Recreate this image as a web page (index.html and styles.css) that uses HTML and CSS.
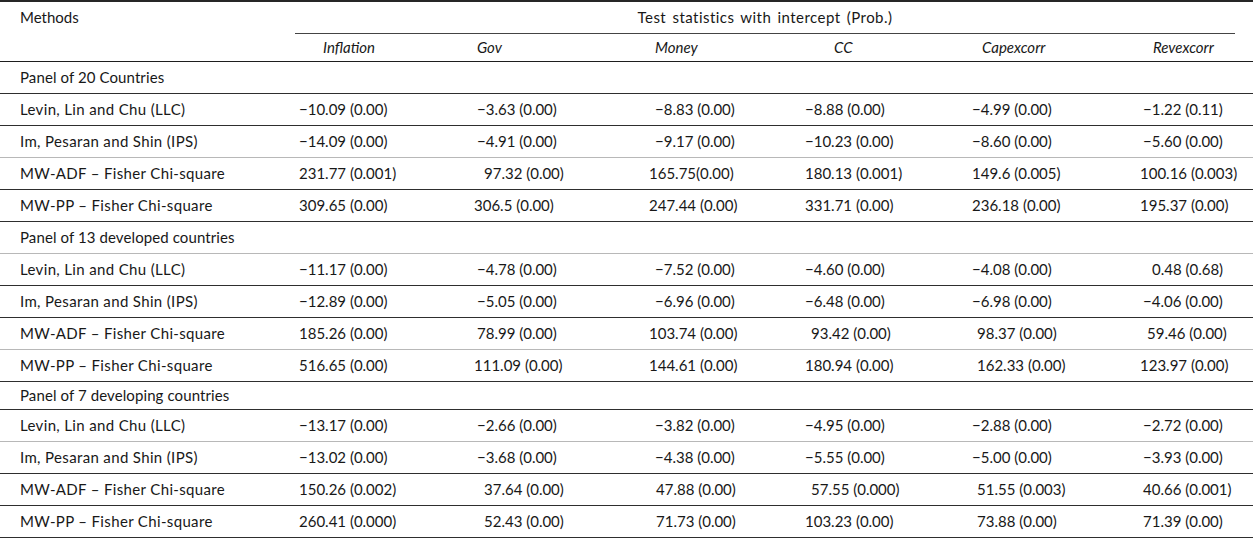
FILE: index.html
```html
<!DOCTYPE html>
<html lang="en">
<head>
<meta charset="utf-8">
<title>Panel unit root tests</title>
<link rel="stylesheet" href="styles.css">
</head>
<body>
<div class="tbl">
  <div class="head">
    <div class="methods">Methods</div>
    <div class="spanhead">Test statistics with intercept (Prob.)</div>
    <div class="ch c-inf">Inflation</div>
    <div class="ch c-gov">Gov</div>
    <div class="ch c-mon">Money</div>
    <div class="ch c-cc">CC</div>
    <div class="ch c-cap">Capexcorr</div>
    <div class="ch c-rev">Revexcorr</div>
  </div>

  <div class="row panel"><div class="label">Panel of 20 Countries</div></div>
  <div class="row">
    <div class="label">Levin, Lin and Chu (LLC)</div>
    <div>&minus;10.09 (0.00)</div><div>&minus;3.63 (0.00)</div><div class="p6">&minus;8.83 (0.00)</div><div>&minus;8.88 (0.00)</div><div>&minus;4.99 (0.00)</div><div class="p3">&minus;1.22 (0.11)</div>
  </div>
  <div class="row light">
    <div class="label">Im, Pesaran and Shin (IPS)</div>
    <div>&minus;14.09 (0.00)</div><div>&minus;4.91 (0.00)</div><div class="p6">&minus;9.17 (0.00)</div><div>&minus;10.23 (0.00)</div><div>&minus;8.60 (0.00)</div><div class="p3">&minus;5.60 (0.00)</div>
  </div>
  <div class="row">
    <div class="label">MW-ADF &ndash; Fisher Chi-square</div>
    <div>231.77 (0.001)</div><div class="p7">97.32 (0.00)</div><div>165.75(0.00)</div><div>180.13 (0.001)</div><div>149.6 (0.005)</div><div>100.16 (0.003)</div>
  </div>
  <div class="row">
    <div class="label">MW-PP &ndash; Fisher Chi-square</div>
    <div>309.65 (0.00)</div><div class="m3">306.5 (0.00)</div><div>247.44 (0.00)</div><div>331.71 (0.00)</div><div>236.18 (0.00)</div><div>195.37 (0.00)</div>
  </div>

  <div class="row panel light"><div class="label">Panel of 13 developed countries</div></div>
  <div class="row">
    <div class="label">Levin, Lin and Chu (LLC)</div>
    <div>&minus;11.17 (0.00)</div><div>&minus;4.78 (0.00)</div><div class="p6">&minus;7.52 (0.00)</div><div>&minus;4.60 (0.00)</div><div>&minus;4.08 (0.00)</div><div class="p12">0.48 (0.68)</div>
  </div>
  <div class="row">
    <div class="label">Im, Pesaran and Shin (IPS)</div>
    <div>&minus;12.89 (0.00)</div><div>&minus;5.05 (0.00)</div><div class="p6">&minus;6.96 (0.00)</div><div>&minus;6.48 (0.00)</div><div>&minus;6.98 (0.00)</div><div class="p3">&minus;4.06 (0.00)</div>
  </div>
  <div class="row light">
    <div class="label">MW-ADF &ndash; Fisher Chi-square</div>
    <div>185.26 (0.00)</div><div>78.99 (0.00)</div><div>103.74 (0.00)</div><div class="p6">93.42 (0.00)</div><div class="p5">98.37 (0.00)</div><div class="p7">59.46 (0.00)</div>
  </div>
  <div class="row">
    <div class="label">MW-PP &ndash; Fisher Chi-square</div>
    <div>516.65 (0.00)</div><div class="m3">111.09 (0.00)</div><div>144.61 (0.00)</div><div>180.94 (0.00)</div><div class="p5">162.33 (0.00)</div><div>123.97 (0.00)</div>
  </div>

  <div class="row panel short"><div class="label">Panel of 7 developing countries</div></div>
  <div class="row light">
    <div class="label">Levin, Lin and Chu (LLC)</div>
    <div>&minus;13.17 (0.00)</div><div>&minus;2.66 (0.00)</div><div class="p6">&minus;3.82 (0.00)</div><div>&minus;4.95 (0.00)</div><div>&minus;2.88 (0.00)</div><div class="p3">&minus;2.72 (0.00)</div>
  </div>
  <div class="row">
    <div class="label">Im, Pesaran and Shin (IPS)</div>
    <div>&minus;13.02 (0.00)</div><div>&minus;3.68 (0.00)</div><div class="p6">&minus;4.38 (0.00)</div><div>&minus;5.55 (0.00)</div><div>&minus;5.00 (0.00)</div><div class="p3">&minus;3.93 (0.00)</div>
  </div>
  <div class="row">
    <div class="label">MW-ADF &ndash; Fisher Chi-square</div>
    <div>150.26 (0.002)</div><div class="p7">37.64 (0.00)</div><div class="p7">47.88 (0.00)</div><div class="p6">57.55 (0.000)</div><div class="p5">51.55 (0.003)</div><div class="p3">40.66 (0.001)</div>
  </div>
  <div class="row">
    <div class="label">MW-PP &ndash; Fisher Chi-square</div>
    <div>260.41 (0.000)</div><div class="p7">52.43 (0.00)</div><div class="p7">71.73 (0.00)</div><div>103.23 (0.00)</div><div class="p5">73.88 (0.00)</div><div class="p3">71.39 (0.00)</div>
  </div>
</div>
</body>
</html>
```

FILE: styles.css
```css
html, body {
  margin: 0;
  padding: 0;
  background: #ffffff;
}

body {
  color: #181818;
  font-family: Lato, "Open Sans", "DejaVu Sans", sans-serif;
  font-size: 15px;
  line-height: 1.2;
}

.tbl {
  width: 1253px;
  border-top: 2px solid #262626;
}

.head,
.row {
  display: grid;
  grid-template-columns: 299px 178px 172px 156px 167px 168px 113px;
}

.head {
  grid-template-rows: 32px 27px;
  border-bottom: 1px solid #1e1e1e;
}

.methods {
  grid-column: 1;
  grid-row: 1;
  padding-left: 20px;
  padding-bottom: 2px;
  align-self: center;
}

.spanhead {
  grid-column: 2 / -1;
  grid-row: 1;
  margin: 0 18px 0 -4px;
  padding-bottom: 2px;
  border-bottom: 1px solid #444444;
  display: flex;
  align-items: center;
  justify-content: center;
  letter-spacing: 0.45px;
  word-spacing: 2px;
}

.ch {
  grid-row: 2;
  align-self: center;
  padding-bottom: 2px;
  font-style: italic;
}

.c-inf { grid-column: 2; padding-left: 24px; }
.c-gov { grid-column: 3; padding-left: 0; }
.c-mon { grid-column: 4; padding-left: 6px; }
.c-cc  { grid-column: 5; padding-left: 29px; }
.c-cap { grid-column: 6; padding-left: 10px; }
.c-rev { grid-column: 7; padding-left: 13px; }

.row {
  height: 31px;
  padding-bottom: 2px;
  box-sizing: border-box;
  height: 32px;
  align-items: center;
  border-bottom: 1px solid #2e2e2e;
  white-space: nowrap;
}

.row.short {
  height: 28px;
}

.row.light {
  border-bottom-color: #b8b8b8;
}

.label {
  padding-left: 20px;
  letter-spacing: 0.35px;
}

.panel .label {
  grid-column: 1 / -1;
  letter-spacing: 0.1px;
}

.p3 { padding-left: 3px; }
.p5 { padding-left: 5px; }
.p6 { padding-left: 6px; }
.p7 { padding-left: 7px; }
.p12 { padding-left: 12px; }
.m3 { margin-left: -3px; }
```
